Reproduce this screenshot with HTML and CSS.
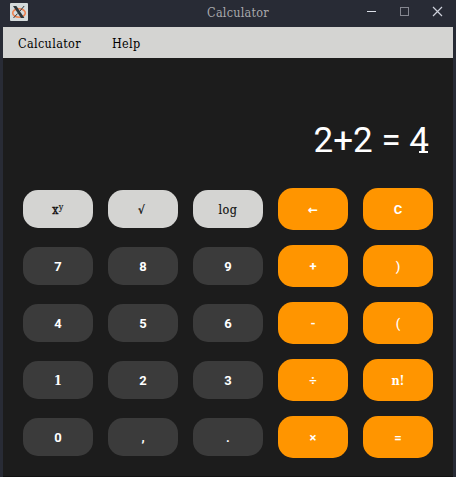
FILE: index.html
```html
<!DOCTYPE html>
<html lang="en">
<head>
<meta charset="utf-8">
<title>Calculator</title>
<link rel="stylesheet" href="styles.css">
</head>
<body>
<div class="window">
  <header class="titlebar">
    <svg class="logo" width="18" height="18" viewBox="0 0 18 18">
      <rect width="18" height="18" rx="1" fill="#d5dbdc"/>
      <ellipse cx="9" cy="10" rx="6.3" ry="4.2" fill="none" stroke="#ef8250" stroke-width="1.6"/>
      <path d="M3 3h3.4l8 12h-3.4z" fill="#30383c"/>
      <path d="M14.2 3L9.8 8.2M7.6 10.5L3.5 15" stroke="#30383c" stroke-width="1"/>
    </svg>
    <span class="title">Calculator</span>
    <svg class="controls" width="78" height="12" viewBox="0 0 78 12" fill="none">
      <path d="M1 6.5h9" stroke="#dcdfe8"/>
      <rect x="34.5" y="2.5" width="8" height="8" stroke="#858790"/>
      <path d="M67 2l9 9M76 2l-9 9" stroke="#cdd0da" stroke-width="1.2"/>
    </svg>
  </header>
  <nav class="menu"><span>Calculator</span><span>Help</span></nav>
  <main class="body">
    <div class="display">2+2 = <span class="four">4</span></div>
    <div class="keys">
      <button class="key fn"><span class="base">x</span><span class="sup">y</span></button>
      <button class="key fn root">√</button>
      <button class="key fn">log</button>
      <button class="key op arrow">←</button>
      <button class="key op">C</button>
      <button class="key">7</button>
      <button class="key">8</button>
      <button class="key">9</button>
      <button class="key op">+</button>
      <button class="key op light">)</button>
      <button class="key">4</button>
      <button class="key">5</button>
      <button class="key">6</button>
      <button class="key op">-</button>
      <button class="key op light">(</button>
      <button class="key slab">1</button>
      <button class="key">2</button>
      <button class="key">3</button>
      <button class="key op">÷</button>
      <button class="key op slab">n!</button>
      <button class="key">0</button>
      <button class="key">,</button>
      <button class="key">.</button>
      <button class="key op">×</button>
      <button class="key op">=</button>
    </div>
  </main>
</div>
</body>
</html>
```
FILE: styles.css
```css
* { box-sizing: border-box; }
body { margin: 0; background: #282b35; font-family: "Roboto Slab", "DejaVu Serif Condensed", "DejaVu Serif", serif; font-stretch: condensed; }
.window { width: 456px; height: 477px; padding: 0 3px; display: flex; flex-direction: column; overflow: hidden; }
.titlebar { height: 27px; flex: none; display: grid; grid-template-columns: 85px 1fr 85px; padding-left: 7px; }
.logo { margin-top: 3px; }
.title { color: #a9a9ac; font-size: 12.5px; line-height: 26px; letter-spacing: .25px; text-align: center; padding-left: 13px; }
.controls { margin-top: 5px; justify-self: end; margin-right: 9px; }
.menu { height: 31px; flex: none; display: flex; gap: 31px; padding-left: 15px; background: #d4d4d2; color: #000; font-size: 12.5px; line-height: 33px; letter-spacing: .35px; }
.body { flex: 1; background: #1c1c1c; padding: 55px 20px 0; border-bottom: 1px solid #111; }
.display { height: 75px; color: #fff; font: 35px/55px Roboto, sans-serif; text-align: right; padding-right: 4px; white-space: pre; }
.four { position: relative; }
.four::after { content: ""; position: absolute; right: 1px; bottom: 8px; width: 9px; height: 2px; background: #fff; }
.keys { display: grid; grid-template-columns: repeat(5, 70px); grid-auto-rows: 42px; gap: 15px; align-items: center; }
.key { height: 38px; border: 0; border-radius: 15px; padding: 1px 0 0; background: #3b3b3b; color: #fff; font: bold 13px Roboto, sans-serif; display: flex; align-items: center; justify-content: center; }
.fn { background: #d4d4d2; color: #111; font: 12.5px "Roboto Slab", "DejaVu Serif Condensed", "DejaVu Serif", serif; font-stretch: condensed; letter-spacing: .4px; -webkit-text-stroke: .15px #111; }
.base { font-size: 12px; -webkit-text-stroke: .4px #111; }
.sup { font-size: 9px; margin-bottom: 5px; }
.root { font-weight: bold; font-size: 11.5px; padding-right: 3px; }
.op { height: 42px; background: #ff9500; }
.light { font-weight: 500; }
.slab { font-family: "Roboto Slab", "DejaVu Serif Condensed", "DejaVu Serif", serif; font-stretch: condensed; font-size: 12.5px; }
.arrow { font-family: "DejaVu Sans", sans-serif; font-size: 12px; }
```
